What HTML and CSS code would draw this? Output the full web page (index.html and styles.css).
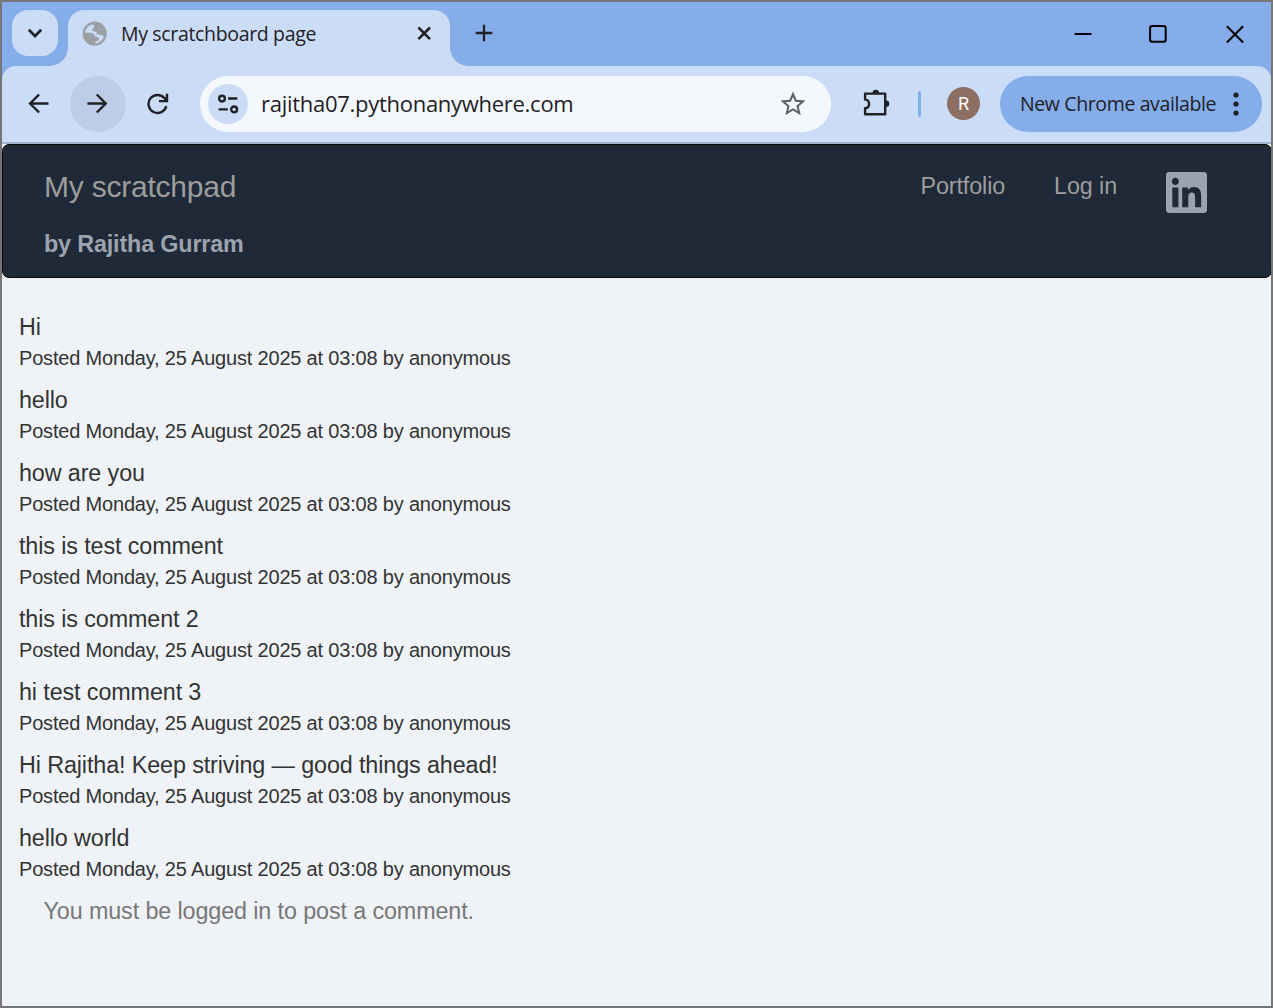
FILE: index.html
```html
<!DOCTYPE html>
<html lang="en">
<head>
<meta charset="utf-8">
<title>My scratchboard page</title>
<link rel="stylesheet" href="styles.css">
</head>
<body>
<div class="window">
  <header class="tabstrip">
    <button class="tab-search" aria-label="Search tabs"><svg width="46" height="46" viewBox="0 0 46 46"><path d="M16.8 19.8l6.2 6.2 6.2-6.2" fill="none" stroke="#1f2125" stroke-width="2.7"/></svg></button>
    <div class="tab">
      <svg class="globe" width="26" height="26" viewBox="0 0 26 26"><circle cx="12.7" cy="12.7" r="10.9" fill="#cbdcf6" stroke="#9ba0a6" stroke-width="2.4"/><path fill="#9ba0a6" d="M8.2 3.2 16 2.1 22 6.2 24.3 13.2 21.5 15.5C20 13.8 18.6 13.7 17.2 13.7 15.4 13.7 14.6 12.7 14.5 10.9 10.8 10.9 10.1 9.5 10.1 7.5 11.5 7.4 12 6.6 12 5.2 12.4 4.3 12 3.8 10.4 3.4ZM1.2 11.8H8.1C11 11.8 13 13.5 13.3 15.8 15.7 15.8 17.2 16.3 17.2 18 17.2 19.7 15.5 20.2 13.4 20.2L13.2 23.3 7.5 23 3 19Z"/></svg>
      <span class="tab-title">My scratchboard page</span>
      <svg class="tab-close" width="16" height="16" viewBox="0 0 16 16"><path d="M2.4 1.5l11.6 11.6M14 1.5L2.4 13.1" stroke="#1f2125" stroke-width="2.5"/></svg>
    </div>
    <svg class="new-tab" width="18" height="18" viewBox="0 0 18 18"><path d="M9 .7v16.6M.7 9h16.6" stroke="#1f2125" stroke-width="2.3"/></svg>
    <div class="window-controls">
      <svg width="18" height="18" viewBox="0 0 18 18"><path d="M.5 9h17" stroke="#000" stroke-width="2"/></svg>
      <svg width="18" height="18" viewBox="0 0 18 18"><rect x="1.1" y="1.1" width="15.6" height="15.6" rx="2" fill="none" stroke="#000" stroke-width="2"/></svg>
      <svg class="window-close" width="18" height="18" viewBox="0 0 18 18"><path d="M.9 1.3l16.2 16.2M17.1 1.3L.9 17.5" stroke="#000" stroke-width="2"/></svg>
    </div>
  </header>
  <div class="toolbar-wrap">
    <div class="toolbar">
      <div class="nav-button"><svg width="22" height="22" viewBox="0 0 22 22"><path d="M21.5 10.5H4M12.1 1.5L3.1 10.5l9 9" fill="none" stroke="#1f2125" stroke-width="2.4"/></svg></div>
      <div class="nav-button hovered"><svg width="22" height="22" viewBox="0 0 22 22"><path d="M.4 10.5h17.5M9.8 1.5l9 9-9 9" fill="none" stroke="#1f2125" stroke-width="2.4"/></svg></div>
      <div class="nav-button"><svg width="22" height="22" viewBox="0 0 22 22"><path d="M19.3 13.1A9 9 0 1 1 17.5 5.2l2.2 2.3M20 .8v7.3h-8" fill="none" stroke="#1f2125" stroke-width="2.4"/></svg></div>
      <div class="omnibox">
        <div class="site-info"><svg width="22" height="20" viewBox="0 0 22 20"><g fill="none" stroke="#1f2125" stroke-width="2.4"><circle cx="5" cy="4.6" r="2.9"/><circle cx="17.1" cy="15.4" r="2.9"/><path d="M11 4.5h9.3M1.6 15.4h9.3"/></g></svg></div>
        <span class="address">rajitha07.pythonanywhere.com</span>
        <svg class="star" width="30" height="30" viewBox="0 0 24 24"><path fill="#5e6064" d="M22 9.24l-7.19-.62L12 2 9.19 8.63 2 9.24l5.46 4.73L5.82 21 12 17.27 18.18 21l-1.63-7.03L22 9.24zM12 15.4l-3.76 2.27 1-4.28-3.32-2.88 4.38-.38L12 6.1l1.71 4.04 4.38.38-3.32 2.88 1 4.28L12 15.4z"/></svg>
      </div>
      <svg class="extensions" width="30" height="30" viewBox="0 0 30 30"><path fill="none" stroke="#1f2125" stroke-width="2.4" stroke-linejoin="round" d="M4.1 5.6H24.2V26.2H4.1V20.2C9.4 19.9 9.4 11.9 4.1 11.6Z"/><path fill="#1f2125" d="M11.5 5a3.3 3.3 0 0 1 6.6 0ZM25 12.4a3.3 3.3 0 0 1 0 6.6Z"/></svg>
      <span class="divider"></span>
      <span class="avatar">R</span>
      <div class="update"><span class="update-text">New Chrome available</span><svg width="6" height="24" viewBox="0 0 6 24"><g fill="#1f2125"><circle cx="3" cy="3" r="2.6"/><circle cx="3" cy="12" r="2.6"/><circle cx="3" cy="21" r="2.6"/></g></svg></div>
    </div>
  </div>
  <div class="page">
    <nav class="navbar">
      <div class="brand"><a class="site-name">My scratchpad</a><p class="byline">by Rajitha Gurram</p></div>
      <div class="links">
        <a class="portfolio">Portfolio</a>
        <a class="login">Log in</a>
        <svg class="linkedin" width="41" height="41" viewBox="0 32 448 448"><path fill="#9ca3af" d="M416 32H31.9C14.3 32 0 46.5 0 64.3v383.4C0 465.5 14.3 480 31.9 480H416c17.6 0 32-14.5 32-32.3V64.3c0-17.8-14.4-32.3-32-32.3zM135.4 416H69V202.2h66.5V416zm-33.2-243c-21.3 0-38.5-17.3-38.5-38.5S80.9 96 102.2 96c21.2 0 38.5 17.3 38.5 38.5 0 21.3-17.2 38.5-38.5 38.5zm282.1 243h-66.4V312c0-24.8-.5-56.7-34.5-56.7-34.6 0-39.9 27-39.9 54.9V416h-66.4V202.2h63.7v29.2h.9c8.9-16.8 30.6-34.5 62.9-34.5 67.2 0 79.7 44.3 79.7 101.9V416z"/></svg>
      </div>
    </nav>
    <main class="comments">
      <article class="comment"><p class="text">Hi</p><p class="meta">Posted Monday, 25 August 2025 at 03:08 by anonymous</p></article>
      <article class="comment"><p class="text">hello</p><p class="meta">Posted Monday, 25 August 2025 at 03:08 by anonymous</p></article>
      <article class="comment"><p class="text">how are you</p><p class="meta">Posted Monday, 25 August 2025 at 03:08 by anonymous</p></article>
      <article class="comment"><p class="text">this is test comment</p><p class="meta">Posted Monday, 25 August 2025 at 03:08 by anonymous</p></article>
      <article class="comment"><p class="text">this is comment 2</p><p class="meta">Posted Monday, 25 August 2025 at 03:08 by anonymous</p></article>
      <article class="comment"><p class="text">hi test comment 3</p><p class="meta">Posted Monday, 25 August 2025 at 03:08 by anonymous</p></article>
      <article class="comment"><p class="text">Hi Rajitha! Keep striving — good things ahead!</p><p class="meta">Posted Monday, 25 August 2025 at 03:08 by anonymous</p></article>
      <article class="comment"><p class="text">hello world</p><p class="meta">Posted Monday, 25 August 2025 at 03:08 by anonymous</p></article>
      <p class="login-note">You must be logged in to post a comment.</p>
    </main>
  </div>
</div>
</body>
</html>
```
FILE: styles.css
```css
* { box-sizing: border-box; }
body { margin: 0; }
p { margin: 0; }
svg { display: block; flex: none; }
span, a { white-space: nowrap; }

.window {
  width: 1273px;
  height: 1008px;
  border: 2px solid #767676;
  display: flex;
  flex-direction: column;
  overflow: hidden;
  font-family: "Open Sans", sans-serif;
  color: #1f2125;
}

/* Tab strip */
.tabstrip {
  height: 64px;
  flex: none;
  display: flex;
  padding-left: 10px;
  background: #85adea;
}
.tab-search {
  width: 46px;
  height: 46px;
  margin: 8px 10px 0 0;
  padding: 0;
  border: 0;
  border-radius: 16px;
  background: #cbdcf6;
}
.tab {
  position: relative;
  width: 382px;
  height: 56px;
  margin-top: 8px;
  padding: 0 18px 8px 14px;
  display: flex;
  align-items: center;
  border-radius: 16px 16px 0 0;
  background: #cbdcf6;
}
.tab::before, .tab::after {
  content: "";
  position: absolute;
  bottom: 0;
  width: 18px;
  height: 18px;
}
.tab::before { left: -18px; background: radial-gradient(circle at 0 0, transparent 17.5px, #cbdcf6 18px); }
.tab::after { right: -18px; background: radial-gradient(circle at 100% 0, transparent 17.5px, #cbdcf6 18px); }
.tab-title { margin: 0 0 2px 13px; font-size: 19.5px; letter-spacing: -0.34px; }
.tab-close { margin-left: auto; }
.new-tab { margin: 22px 0 0 25px; }
.window-controls {
  display: flex;
  gap: 57px;
  margin: 23px 27.5px 0 auto;
}
.window-close { margin-left: 1.5px; }

/* Toolbar */
.toolbar-wrap { flex: none; background: #85adea; }
.toolbar {
  height: 78px;
  display: flex;
  align-items: center;
  padding-left: 8px;
  border-bottom: 2px solid #a3b1cb;
  border-radius: 14px 14px 0 0;
  background: #cbdcf6;
}
.nav-button {
  width: 56px;
  height: 56px;
  margin-right: 4px;
  flex: none;
  display: flex;
  align-items: center;
  justify-content: center;
  border-radius: 50%;
}
.hovered { background: #bdcde7; }
.omnibox {
  width: 631px;
  height: 56px;
  margin-left: 10px;
  padding: 0 23px 0 8px;
  flex: none;
  display: flex;
  align-items: center;
  border-radius: 28px;
  background: #f4f8fd;
}
.site-info {
  width: 40px;
  height: 40px;
  display: flex;
  align-items: center;
  justify-content: center;
  border-radius: 50%;
  background: #cbdcf6;
}
.address { margin: 0 0 2px 13px; font-size: 22px; letter-spacing: -0.28px; }
.star { margin-left: auto; }
.extensions { margin: 0 1px 2px 30px; }
.divider {
  width: 3px;
  height: 26px;
  margin-left: 26px;
  border-radius: 2px;
  background: #85adea;
}
.avatar {
  width: 33px;
  height: 33px;
  margin: 0 0 1px 26px;
  border-radius: 50%;
  background: #8d6e63;
  color: #fff;
  font: 18px/33px Roboto, sans-serif;
  text-align: center;
}
.update {
  width: 262px;
  height: 56px;
  margin-left: 20px;
  padding: 0 23px 0 20px;
  display: flex;
  align-items: center;
  justify-content: space-between;
  border-radius: 28px;
  background: #85adea;
}
.update-text { margin-bottom: 1px; font-size: 19.5px; letter-spacing: -0.38px; }

/* Page */
.page {
  flex: 1;
  background: #eff3f8;
  font-family: "Liberation Sans", Arial, sans-serif;
  font-size: 23.33px;
  letter-spacing: -0.11px;
}
.navbar {
  height: 134px;
  margin-right: -1px;
  padding: 0 64px 0 41px;
  display: flex;
  justify-content: space-between;
  border: 1px solid #080808;
  border-radius: 7px;
  background: #1f2937;
}
.site-name { display: block; margin-top: 25px; font-size: 30px; line-height: 34px; letter-spacing: -0.22px; color: #9d9d9d; }
.byline { margin-top: 26px; line-height: 28px; font-weight: bold; letter-spacing: -0.15px; color: #9ca3af; }
.links { display: flex; align-items: flex-start; color: #9d9d9d; line-height: 28px; }
.portfolio, .login { margin: 27px 49px 0 0; }
.linkedin { margin-top: 27px; }
.comments { padding: 32px 17px 0; color: #333; }
.comment { height: 73px; }
.text { line-height: 34px; }
.meta { font-size: 20px; line-height: 28px; letter-spacing: -0.185px; }
.login-note { margin-left: 24.5px; line-height: 34px; color: #777; }
```
